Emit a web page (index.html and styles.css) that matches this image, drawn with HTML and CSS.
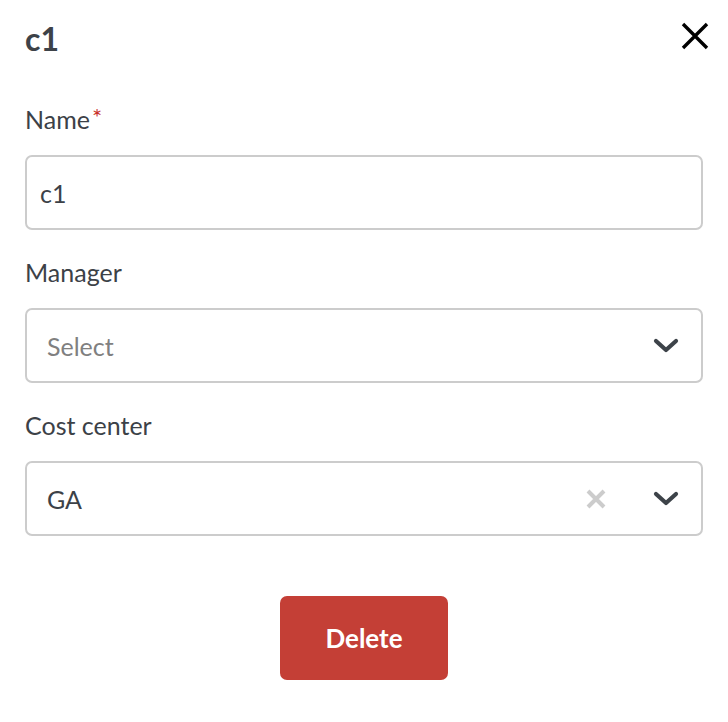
FILE: index.html
```html
<!DOCTYPE html>
<html lang="en">
<head>
<meta charset="utf-8">
<title>c1</title>
<link rel="stylesheet" href="styles.css">
</head>
<body>
<div class="panel">
  <header class="head">
    <h1 class="title">c1</h1>
    <button class="close" aria-label="Close">
      <svg width="28" height="28" viewBox="0 0 28 28"><path d="M2 2 L26 26 M26 2 L2 26" stroke="#000" stroke-width="3.4" fill="none"/></svg>
    </button>
  </header>
  <div class="form">
    <div class="field">
      <label class="label">Name<span class="req">*</span></label>
      <div class="control input">c1</div>
    </div>
    <div class="field">
      <label class="label">Manager</label>
      <div class="control select">
        <span class="value placeholder">Select</span>
        <span class="indicators">
          <svg class="chev" width="26" height="16" viewBox="0 0 26 16"><path d="M3 3 L13 12 L23 3" stroke="#3d4349" stroke-width="4.2" fill="none" stroke-linecap="round" stroke-linejoin="round"/></svg>
        </span>
      </div>
    </div>
    <div class="field">
      <label class="label">Cost center</label>
      <div class="control select">
        <span class="value">GA</span>
        <span class="indicators">
          <svg class="clear" width="22" height="22" viewBox="0 0 22 22"><path d="M3 3 L19 19 M19 3 L3 19" stroke="#cccccc" stroke-width="4" fill="none"/></svg>
          <svg class="chev" width="26" height="16" viewBox="0 0 26 16"><path d="M3 3 L13 12 L23 3" stroke="#3d4349" stroke-width="4.2" fill="none" stroke-linecap="round" stroke-linejoin="round"/></svg>
        </span>
      </div>
    </div>
  </div>
  <div class="actions">
    <button class="delete">Delete</button>
  </div>
</div>
</body>
</html>
```
FILE: styles.css
```css
* { box-sizing: border-box; }
html, body { margin: 0; padding: 0; background: #fff; }
body { font-family: Lato, "Open Sans", sans-serif; color: #3c4147; }
.panel { padding: 0 25px; }
.head { display: flex; justify-content: space-between; align-items: flex-start; height: 105px; padding-top: 19px; }
.title { margin: 0; font-size: 32px; line-height: 40px; font-weight: 700; color: #3d4248; }
.close { border: 0; background: none; padding: 0; margin: 3px -6px 0 0; width: 28px; height: 28px; display: block; cursor: pointer; }
.close svg { display: block; }
.field { display: flex; flex-direction: column; margin-bottom: 28px; }
.label { display: block; font-size: 25px; line-height: 28px; height: 28px; margin-bottom: 22px; color: #3c4147; }
.req { color: #c8312b; font-size: 24px; vertical-align: top; line-height: 24px; margin-left: 2px; }
.control { height: 75px; border: 2px solid #cccccc; border-radius: 7px; display: flex; align-items: center; font-size: 25px; color: #3c4147; }
.input { padding-left: 13px; }
.select { padding-left: 20px; padding-right: 22px; }
.value { flex: 1; }
.placeholder { color: #808080; }
.indicators { display: flex; align-items: center; gap: 46px; }
.chev, .clear { display: block; }
.actions { display: flex; justify-content: center; padding-top: 32px; }
.delete { width: 168px; height: 84px; border: 0; border-radius: 7px; background: #c43f36; color: #fff; font-family: Lato, "Open Sans", sans-serif; font-weight: 700; font-size: 26px; cursor: pointer; }
```
